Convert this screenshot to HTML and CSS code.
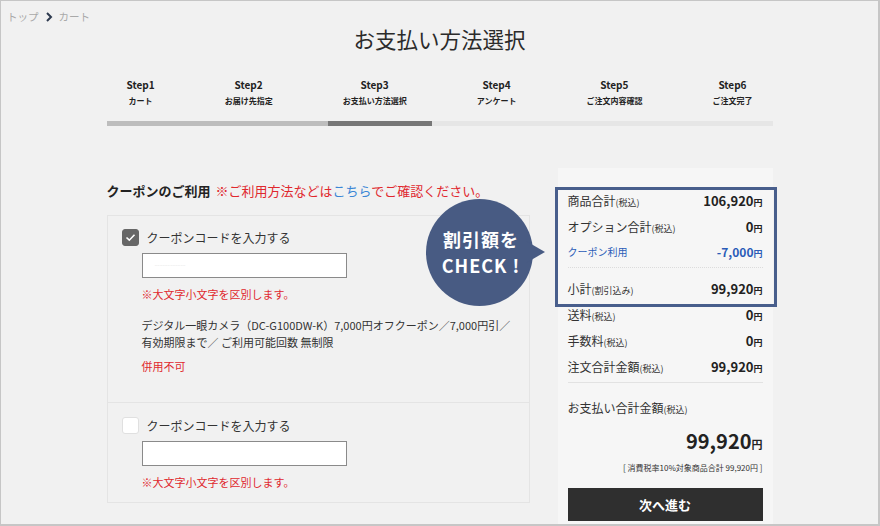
FILE: index.html
```html
<!DOCTYPE html>
<html>
	<head>
		<meta charset="UTF-8">
		<title>お支払い方法選択</title>
		<link rel="stylesheet" href="styles.css">
	</head>
	<body>
		<div class="page">
			<div class="crumb">
				<a href="javascript:;">トップ</a>
				<svg class="crumb-arrow" width="8" height="10" viewBox="0 0 8 10"><path d="M2 1 L6 5 L2 9" fill="none" stroke="#2e3a4f" stroke-width="2"/></svg>
				<a href="javascript:;">カート</a>
			</div>

			<h1 class="title">お支払い方法選択</h1>

			<div class="wrap">
				<ul class="steps">
					<li><b>Step1</b><span>カート</span></li>
					<li><b>Step2</b><span>お届け先指定</span></li>
					<li><b>Step3</b><span>お支払い方法選択</span></li>
					<li><b>Step4</b><span>アンケート</span></li>
					<li><b>Step5</b><span>ご注文内容確認</span></li>
					<li><b>Step6</b><span>ご注文完了</span></li>
				</ul>
				<div class="bar">
					<div class="bar-done"></div>
					<div class="bar-now"></div>
				</div>

				<div class="content">
					<div class="coupon">
						<h2 class="coupon-head">クーポンのご利用<span class="red">※ご利用方法などは<a href="javascript:;" class="link">こちら</a>でご確認ください。</span></h2>

						<div class="coupon-box">
							<div class="coupon-item">
								<label class="check-row">
									<span class="check on"><svg width="11" height="9" viewBox="0 0 11 9"><path d="M1.5 4.5 L4.3 7.2 L9.5 1.8" fill="none" stroke="#fff" stroke-width="1.6"/></svg></span>
									クーポンコードを入力する
								</label>
								<div class="code-input"><span class="code-ghost">- - - - - - - - - - - -</span></div>
								<p class="note">※大文字小文字を区別します。</p>
								<p class="desc">デジタル一眼カメラ（DC-G100DW-K）7,000円オフクーポン／7,000円引／<br>有効期限まで／ ご利用可能回数 無制限</p>
								<p class="desc red">併用不可</p>
							</div>
							<div class="coupon-item last">
								<label class="check-row">
									<span class="check"></span>
									クーポンコードを入力する
								</label>
								<div class="code-input"></div>
								<p class="note">※大文字小文字を区別します。</p>
							</div>
						</div>

						<div class="bubble">
							<svg class="bubble-bg" width="122" height="108" viewBox="0 0 122 108"><circle cx="53.5" cy="53.5" r="53.5" fill="#485b83"/><path d="M100 42 L119 53 L100 64 Z" fill="#485b83"/></svg>
							<p class="bubble-text">割引額を<br>CHECK !</p>
						</div>
					</div>

					<div class="summary">
						<div class="sum-row"><span>商品合計<small>(税込)</small></span><b>106,920<small>円</small></b></div>
						<div class="sum-row"><span>オプション合計<small>(税込)</small></span><b>0<small>円</small></b></div>
						<div class="sum-row blue small-row"><span>クーポン利用</span><b>-7,000<small>円</small></b></div>
						<div class="sum-row sub"><span>小計<small>(割引込み)</small></span><b>99,920<small>円</small></b></div>
						<div class="sum-row"><span>送料<small>(税込)</small></span><b>0<small>円</small></b></div>
						<div class="sum-row"><span>手数料<small>(税込)</small></span><b>0<small>円</small></b></div>
						<div class="sum-row"><span>注文合計金額<small>(税込)</small></span><b>99,920<small>円</small></b></div>
						<p class="pay-label">お支払い合計金額<small>(税込)</small></p>
						<p class="pay-total">99,920<small>円</small></p>
						<p class="tax-note">[ 消費税率10%対象商品合計 99,920円 ]</p>
						<a href="javascript:;" class="next-btn">次へ進む</a>

						<div class="highlight"></div>
					</div>
				</div>
			</div>
		</div>
	</body>
</html>
```

FILE: styles.css
```css
*{
	box-sizing: border-box;
}
body{
	margin: 0;
	font-family: "Noto Sans CJK JP", "Noto Sans", sans-serif;
	color: #333;
}
a{
	text-decoration: none;
	color: inherit;
}
p,h1,h2,ul{
	margin: 0;
	padding: 0;
}
ul{
	list-style: none;
}
.page{
	width: 880px;
	height: 526px;
	overflow: hidden;
	background: #f1f1f1;
	border: solid #c6c6c6;
	border-width: 1px 2px 2px 1px;
}
.crumb{
	display: flex;
	align-items: center;
	gap: 4px;
	padding: 8px 0 0 6px;
	font-size: 10.5px;
	line-height: 16px;
	color: #a9a9a9;
}
.crumb-arrow{
	margin: 0 2px;
}
.title{
	text-align: center;
	font-size: 21.5px;
	font-weight: normal;
	line-height: 30px;
	margin-top: -1px;
	color: #2b2b2b;
}
.wrap{
	width: 666px;
	margin: 0 auto;
}
.steps{
	display: flex;
	justify-content: space-between;
	padding: 0 20px;
	margin-top: 24px;
	text-align: center;
}
.steps li{
	display: flex;
	flex-direction: column;
	align-items: center;
}
.steps b{
	font-size: 10px;
	line-height: 14px;
	color: #222;
}
.steps span{
	font-size: 8px;
	font-weight: bold;
	line-height: 12px;
	margin-top: 3px;
	color: #222;
	white-space: nowrap;
}
.bar{
	display: flex;
	height: 5px;
	margin-top: 14px;
	background: #e6e6e6;
}
.bar-done{
	width: 221px;
	background: #bdbdbd;
}
.bar-now{
	width: 104px;
	background: #777;
}
.content{
	display: flex;
	gap: 28px;
	margin-top: 42px;
}
.coupon{
	width: 423px;
	position: relative;
}
.coupon-head{
	padding-top: 13px;
	font-size: 13px;
	line-height: 20px;
	font-weight: bold;
	color: #222;
}
.coupon-head .red{
	font-weight: normal;
	margin-left: 5px;
}
.red{
	color: #e0282e;
}
.link{
	color: #3b86d6;
}
.coupon-box{
	margin-top: 14px;
	border: 1px solid #e4e4e4;
}
.coupon-item{
	padding: 13px 14px 27px;
	border-bottom: 1px solid #e4e4e4;
}
.coupon-item.last{
	padding: 14px 14px 12px;
	border-bottom: none;
}
.check-row{
	display: flex;
	align-items: center;
	gap: 8px;
	height: 17px;
	font-size: 12px;
	color: #333;
}
.check{
	width: 17px;
	height: 17px;
	border-radius: 3px;
	background: #fff;
	border: 1px solid #e0e0e0;
	display: flex;
	align-items: center;
	justify-content: center;
}
.check.on{
	background: #676767;
	border-color: #676767;
}
.code-input{
	width: 205px;
	height: 25px;
	margin: 7px 0 0 20px;
	background: #fff;
	border: 1.5px solid #8a8a8a;
	padding-left: 12px;
	font-size: 8px;
	line-height: 21px;
}
.code-ghost{
	color: #ececec;
	letter-spacing: -1px;
}
.note{
	margin: 8px 0 0 20px;
	font-size: 11px;
	line-height: 16px;
	color: #e0282e;
}
.desc{
	margin: 15px 0 0 20px;
	font-size: 11px;
	line-height: 17px;
	white-space: nowrap;
	color: #333;
}
.desc.red{
	margin-top: 7px;
	color: #e0282e;
}
.bubble{
	position: absolute;
	left: 319px;
	top: 31px;
	width: 122px;
	height: 108px;
}
.bubble-bg{
	position: absolute;
	left: 0;
	top: 0;
}
.bubble-text{
	position: relative;
	width: 107px;
	padding-top: 27px;
	text-align: center;
	font-size: 18px;
	font-weight: bold;
	line-height: 26px;
	letter-spacing: 1px;
	color: #fff;
	padding-left: 4px;
}
.summary{
	width: 215px;
	height: 400px;
	background: #f6f6f6;
	padding: 19px 10px 0;
	position: relative;
}
.sum-row{
	display: flex;
	justify-content: space-between;
	align-items: center;
	height: 26px;
	font-size: 12px;
}
.sum-row small{
	font-size: 9px;
}
.sum-row b{
	font-size: 13px;
	color: #222;
}
.sum-row.blue{
	color: #2b5cb8;
	font-size: 10px;
	height: 24px;
}
.sum-row.blue b{
	color: #2b5cb8;
	font-size: 12px;
}
.sum-row.sub{
	margin-top: 4px;
	border-top: 1px dotted #dcdcdc;
	padding-top: 7px;
	height: 34px;
}
.pay-label{
	margin-top: 3px;
	border-top: 1px solid #e2e2e2;
	padding-top: 16px;
	font-size: 12px;
	line-height: 18px;
}
.pay-label small{
	font-size: 9px;
}
.pay-total{
	margin-top: 8px;
	text-align: right;
	font-size: 20px;
	font-weight: bold;
	line-height: 28px;
	color: #222;
}
.pay-total small{
	font-size: 11px;
}
.tax-note{
	margin-top: 4px;
	text-align: right;
	font-size: 8px;
	line-height: 12px;
}
.next-btn{
	display: block;
	margin-top: 14px;
	height: 33px;
	line-height: 33px;
	text-align: center;
	background: #2f2f2f;
	color: #fff;
	font-size: 13px;
	font-weight: bold;
}
.highlight{
	position: absolute;
	left: -3px;
	top: 19px;
	width: 222px;
	height: 120px;
	border: 3px solid #485e8c;
}
```
